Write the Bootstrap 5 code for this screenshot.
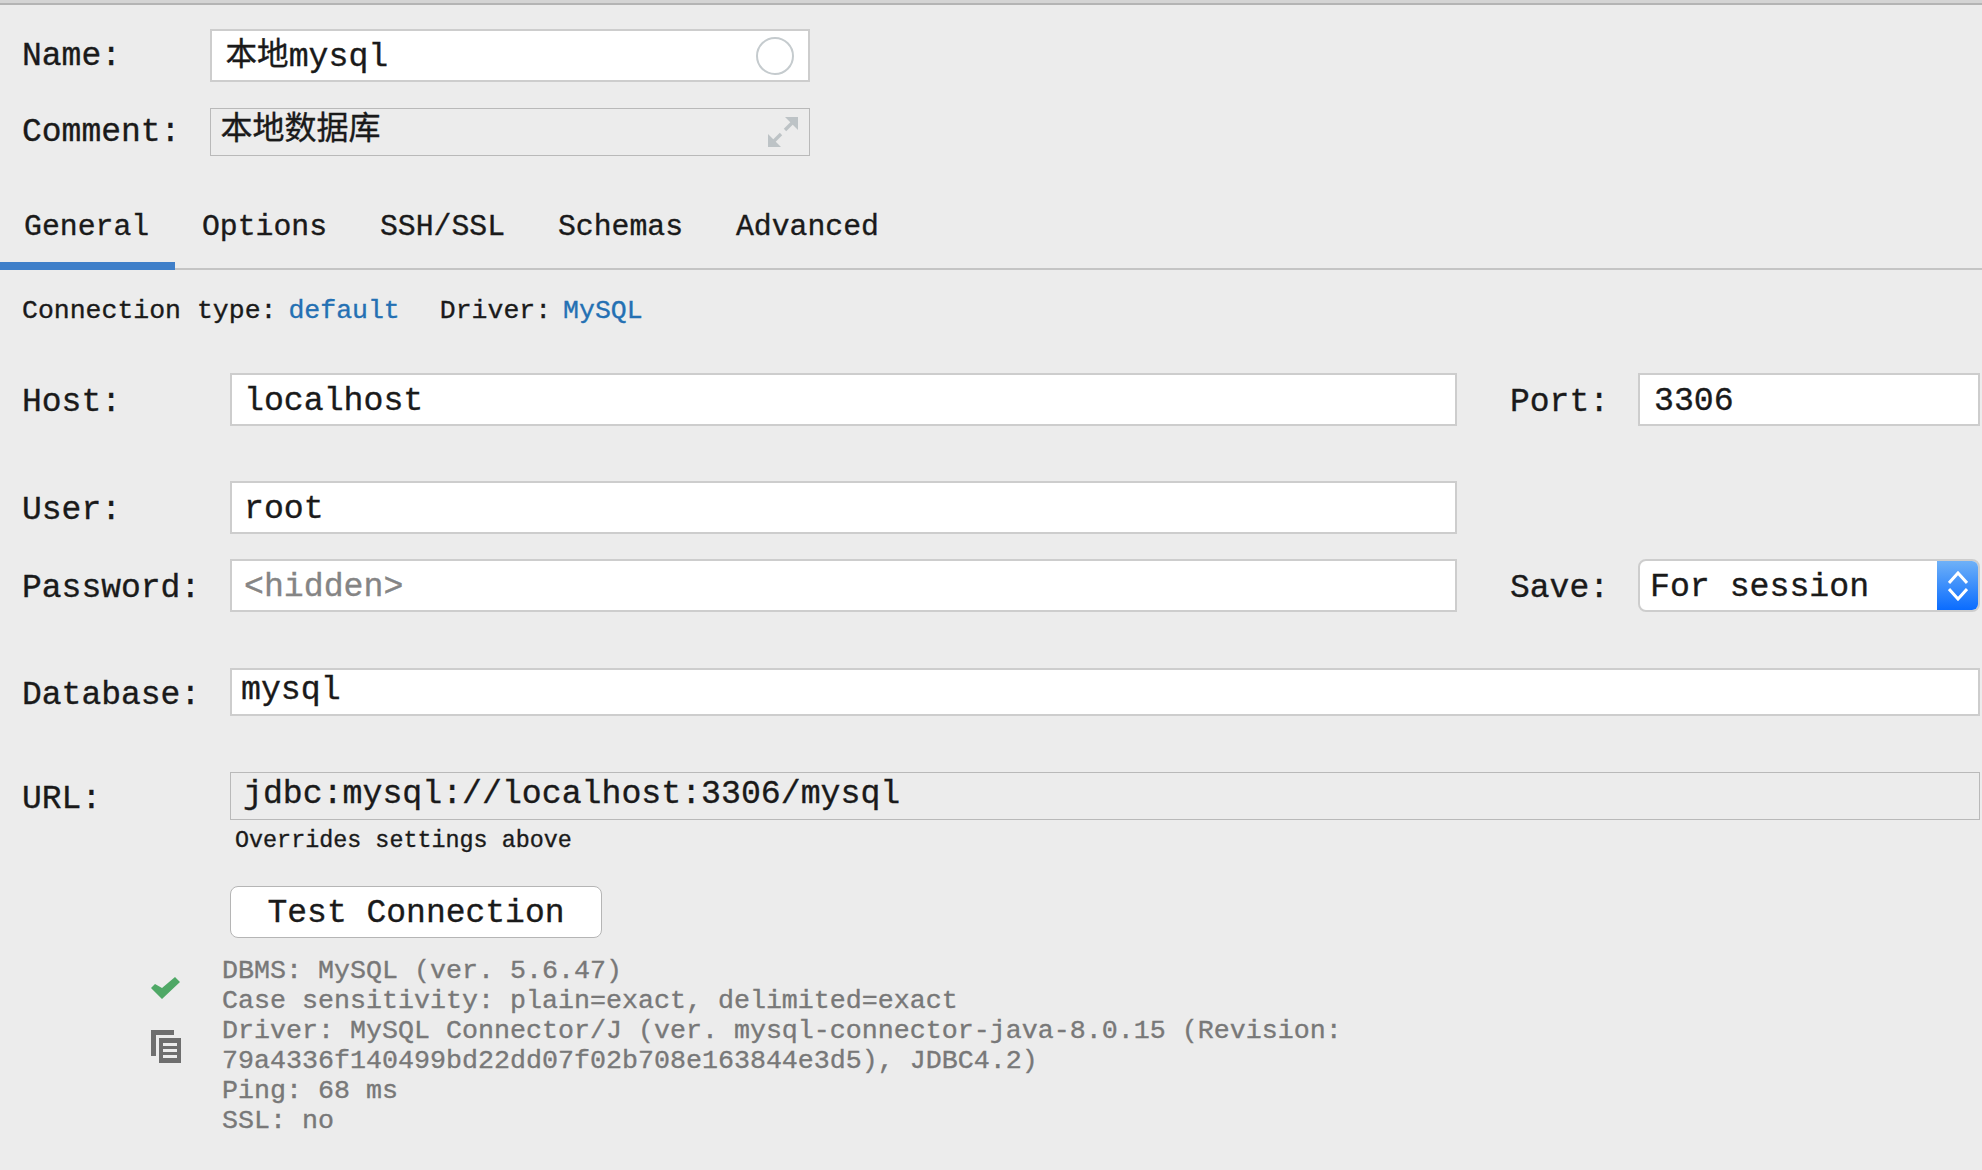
<!DOCTYPE html>
<html lang="en">
<head>
<meta charset="utf-8">
<title>Data source</title>
<link href="https://cdn.jsdelivr.net/npm/bootstrap@5.3.0/dist/css/bootstrap.min.css" rel="stylesheet">
<style>
html,body{height:100%;}
body{background:#ececec;color:#1a1a1a;font-family:"Liberation Mono","Noto Sans CJK SC",monospace;overflow:hidden;-webkit-text-stroke:.35px currentColor;}
.top-edge{height:5px;background:#d4d4d4;border-bottom:2px solid #b4b4b4;}
.pane{padding:0 2px 0 22px;}
.lbl{font-size:33px;line-height:40px;flex:none;padding-top:2px;}
.lbl-main{width:208px;padding-top:7px;}
.lbl-side{width:128px;margin-left:53px;padding-top:7px;}
.lbl-head{width:187.5px;}
.fld.form-control{border-radius:0;border:2px solid #cdcdcd;background:#fff;color:#1a1a1a;font-size:33.2px;line-height:40px;padding:2px 14px 0;display:flex;align-items:center;box-shadow:none;white-space:nowrap;}
.fld-muted.form-control{background:#ececec;border:1px solid #b9b9b9;}
.h-host{height:53px;}
.fld.h-db{height:48px;padding-top:0;padding-bottom:5px;}
.w-head{width:600.5px;}
.w-main{width:1227px;}
.w-side{width:342px;}
.cjk-small{font-size:31.6px;}
.fld.cjk-big{font-size:32px;padding-left:10px;padding-bottom:3px;}
.fld.inset-12{padding-left:12px;}
.fld.inset-10{padding-left:9px;}
.fld.fill-muted{color:#858585;}
.m-name{margin-top:24px;}
.m-comment{margin-top:26px;}
.m-conn{margin-top:21px;}
.m-host{margin-top:42px;}
.m-user{margin-top:55px;}
.m-pass{margin-top:25px;}
.m-database{margin-top:56px;}
.m-url{margin-top:56px;}
.m-test{margin-top:30px;}
.m-info{margin-top:18px;}
.tabstrip{margin:44px 0 0 -3px;border-bottom:2px solid #c4c4c4;height:70px;flex-wrap:nowrap;}
.tabstrip .nav-link{font-size:29.8px;line-height:55px;height:70px;padding:0 25.8px 0 27px;color:#1a1a1a;border-bottom:8px solid transparent;border-radius:0;}
.tabstrip .nav-link.active{border-bottom-color:#3f7fc9;}
.conn-line{font-size:26.5px;line-height:40px;}
.conn-line a{color:#2470b3;text-decoration:none;margin-left:12px;}
.conn-gap{margin-left:40px;}
.note{font-size:23.4px;line-height:30px;margin:6px 0 0 213px;}
.trail{position:absolute;right:14px;top:50%;transform:translateY(-50%);}
.trail-exp{right:11px;}
.fld.pick{position:relative;padding-left:10px;padding-right:0;border-radius:8px;overflow:hidden;}
.pick-arrow{position:absolute;right:0;top:0;bottom:0;width:41px;background:linear-gradient(#6fb1f7,#0a6cff);display:flex;align-items:center;justify-content:center;}
.test-btn.btn{margin-left:208px;width:372px;height:52px;padding:4px 0 0;background:#fff;color:#1a1a1a;border:1px solid #b5b5b5;border-radius:8px;font-size:33px;line-height:46px;}
.status-icons{width:200px;padding-left:129px;padding-top:21px;gap:31px;flex:none;}
.info{font-size:26.66px;line-height:30px;color:#787878;white-space:pre;}
.rel{position:relative;}
</style>
</head>
<body>
<div class="top-edge"></div>

<div class="pane">
  <div class="d-flex align-items-center m-name">
    <div class="lbl lbl-head">Name:</div>
    <div class="fld form-control h-host w-head rel"><span class="cjk-small">本地</span>mysql
      <svg class="trail" width="38" height="38" viewBox="0 0 38 38"><circle cx="19" cy="19" r="18" fill="#fff" stroke="#c5cbce" stroke-width="2"/></svg>
    </div>
  </div>
  <div class="d-flex align-items-center m-comment">
    <div class="lbl lbl-head">Comment:</div>
    <div class="fld form-control fld-muted h-db w-head rel cjk-big">本地数据库
      <svg class="trail trail-exp" width="30" height="30" viewBox="0 0 30 30"><path d="M17 0H30V13Z" fill="#bdc3c6"/><path d="M24 6 17 13" stroke="#bdc3c6" stroke-width="3.4" fill="none"/><path d="M0 17V30H13Z" fill="#bdc3c6"/><path d="M6 24 13 17" stroke="#bdc3c6" stroke-width="3.4" fill="none"/></svg>
    </div>
  </div>
</div>

<ul class="nav tabstrip">
  <li class="nav-item"><a class="nav-link active" href="#">General</a></li>
  <li class="nav-item"><a class="nav-link" href="#">Options</a></li>
  <li class="nav-item"><a class="nav-link" href="#">SSH/SSL</a></li>
  <li class="nav-item"><a class="nav-link" href="#">Schemas</a></li>
  <li class="nav-item"><a class="nav-link" href="#">Advanced</a></li>
</ul>

<div class="pane">
  <div class="conn-line d-flex m-conn">
    <span>Connection type:</span><a href="#">default</a>
    <span class="conn-gap">Driver:</span><a href="#">MySQL</a>
  </div>

  <div class="d-flex align-items-center m-host">
    <div class="lbl lbl-main">Host:</div>
    <div class="fld form-control h-host w-main inset-12">localhost</div>
    <div class="lbl lbl-side">Port:</div>
    <div class="fld form-control h-host w-side">3306</div>
  </div>

  <div class="d-flex align-items-center m-user">
    <div class="lbl lbl-main">User:</div>
    <div class="fld form-control h-host w-main inset-12">root</div>
  </div>

  <div class="d-flex align-items-center m-pass">
    <div class="lbl lbl-main">Password:</div>
    <div class="fld form-control h-host w-main fill-muted inset-12">&lt;hidden&gt;</div>
    <div class="lbl lbl-side">Save:</div>
    <div class="fld form-control h-host w-side pick">For session
      <span class="pick-arrow"><svg width="20" height="30" viewBox="0 0 20 30"><path d="M1 12 10 2 19 12M1 18 10 28 19 18" fill="none" stroke="#fff" stroke-width="3"/></svg></span>
    </div>
  </div>

  <div class="d-flex align-items-center m-database">
    <div class="lbl lbl-main">Database:</div>
    <div class="fld form-control h-db flex-grow-1 inset-10">mysql</div>
  </div>

  <div class="d-flex align-items-center m-url">
    <div class="lbl lbl-main">URL:</div>
    <div class="fld form-control fld-muted h-db flex-grow-1 inset-12">jdbc:mysql://localhost:3306/mysql</div>
  </div>
  <div class="note">Overrides settings above</div>

  <div class="m-test"><button type="button" class="btn test-btn">Test Connection</button></div>

  <div class="d-flex m-info">
    <div class="d-flex flex-column status-icons">
      <svg width="29" height="22" viewBox="0 0 29 22"><path d="M0 11 4 7 11 11 24 0 29 5 11 22Z" fill="#4fa866"/></svg>
      <svg width="30" height="33" viewBox="0 0 30 33"><path d="M0 0H23V5H5V26H0Z" fill="#6e6e6e"/><path fill-rule="evenodd" d="M8 8H30V33H8ZM12 13V16H26V13ZM12 19V22H26V19ZM12 25V28H26V25Z" fill="#6e6e6e"/></svg>
    </div>
    <div class="info">DBMS: MySQL (ver. 5.6.47)
Case sensitivity: plain=exact, delimited=exact
Driver: MySQL Connector/J (ver. mysql-connector-java-8.0.15 (Revision:
79a4336f140499bd22dd07f02b708e163844e3d5), JDBC4.2)
Ping: 68 ms
SSL: no</div>
  </div>
</div>
<script src="https://cdn.jsdelivr.net/npm/bootstrap@5.3.0/dist/js/bootstrap.bundle.min.js"></script>
</body>
</html>
